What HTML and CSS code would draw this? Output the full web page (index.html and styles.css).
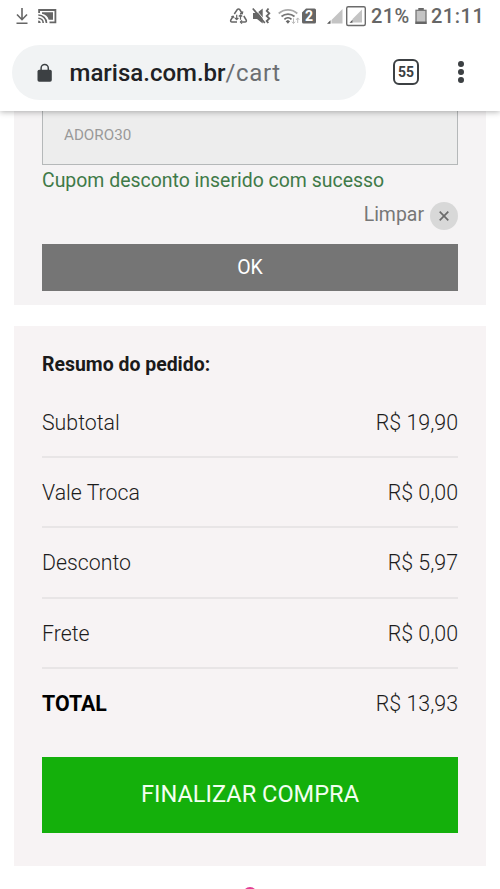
FILE: index.html
```html
<!DOCTYPE html>
<html lang="pt-BR">
<head>
<meta charset="utf-8">
<title>Marisa - Carrinho</title>
<link rel="stylesheet" href="styles.css">
</head>
<body>
<div class="screen">
  <header class="browser">
    <div class="status">
      <div class="status-left">
        <svg width="16" height="32" viewBox="14 0 16 32"><path d="M22 8v11.500M17 14.500l5 5.200 5-5.200M16.500 23.200h11" fill="none" stroke="#666" stroke-width="1.600"/></svg>
        <svg width="22" height="32" viewBox="36 0 22 32"><path d="M39.100 13V10h16.300v12.300H49.500" fill="none" stroke="#666" stroke-width="1.800"/><path d="M42 12.300h11v7.400h-4.300c-.7-3.200-3.400-5.500-6.700-6z" fill="#666"/><path d="M38.300 15c4.500 0 8.200 3.500 8.200 8M38.300 18.200c2.700 0 4.900 2.100 4.900 4.800" fill="none" stroke="#666" stroke-width="1.600"/><path d="M38.200 20.500a2.500 2.500 0 0 1 2.500 2.500h-2.500z" fill="#666"/></svg>
      </div>
      <div class="status-right">
        <svg width="22" height="32" viewBox="228 0 22 32"><g fill="none" stroke="#666" stroke-width="1.500" stroke-linejoin="round"><path d="M234.300 14l3-4.500c.6-.8 1.800-.8 2.400 0l2.500 4M243.800 16l2.400 4c.5.900 0 2-1.200 2h-4M237 22h-5c-1.200 0-1.700-1.100-1.200-2l2.200-3.500"/><path d="M240 13.300l2.300.5.500-2.400M231.300 16.700l2-.6.800 2M242 20.300l-1.600 1.700 1.600 1.600" stroke-width="1.200"/><path d="M236.700 14.800v4.700M235 18l1.700 1.700L238.400 18M240.500 19.800v-4.700M238.800 16.500l1.700-1.600 1.700 1.600" stroke-width="1.200"/></g></svg>
        <svg width="24" height="32" viewBox="250 0 24 32"><path d="M253 13h4l5.700-4.500v15L257 19h-4z" fill="#666"/><path d="M252.800 8.500l12 14.500" fill="none" stroke="#666" stroke-width="1.700"/><path d="M254.200 7.600l12 14.500" stroke="#fff" stroke-width=".9"/><path d="M268.500 8.500l-1.800 2.500 2.600 2.400-2.600 2.600 2.600 2.500-2.600 2.500 1.600 2" fill="none" stroke="#666" stroke-width="1.800"/></svg>
        <svg width="27" height="32" viewBox="274 0 27 32"><g fill="none" stroke="#777" stroke-width="1.700"><path d="M278.700 13.500c5.300-4.800 13.300-4.800 18.600 0" stroke="#aaa"/><path d="M281.500 16.500c3.700-3.300 9.300-3.300 13 0"/><path d="M284.400 19.300c2-1.800 5.100-1.800 7.100 0" stroke="#666"/></g><path d="M285.700 21.300l2.200-1.400 2.200 1.400-2.200 2.400z" fill="#666"/><path d="M293.500 18.300v5M292 21.700l1.500 1.900 1.500-1.900M297.700 23v-5M296.200 19.800l1.500-1.900 1.500 1.900" fill="none" stroke="#bbb" stroke-width="1"/></svg>
        <span class="sim"><svg width="14" height="16" viewBox="0 0 14 16"><path d="M4 .5h8.500a1.500 1.500 0 0 1 1.500 1.500v12a1.500 1.500 0 0 1-1.500 1.500h-11A1.500 1.500 0 0 1 0 14V4.500z" fill="#666"/></svg><b>2</b></span>
        <svg width="26" height="32" viewBox="319 0 26 32"><path d="M331.500 23.500V20l11-11v14.500z" fill="#c4c4c4"/><path d="M327 23.700l3.500-3.500v3.500z" fill="#555"/></svg>
        <svg width="23" height="32" viewBox="345 0 23 32"><rect x="346.700" y="6.700" width="18.600" height="18.800" rx="1.500" fill="none" stroke="#6b6b6b" stroke-width="1.400"/><path d="M352.500 22.500V19l9.500-9.500v13z" fill="#c4c4c4"/><path d="M349.500 22.700l3-3v3z" fill="#555"/></svg>
        <span class="battery-text">21%</span>
        <svg class="battery" width="14" height="32" viewBox="414 0 14 32"><path d="M418.300 8h5.500v2.500h-5.500z" fill="#666"/><rect x="416" y="10.300" width="10" height="13" fill="#c4c4c4" stroke="#777" stroke-width="1.300"/><path d="M415.500 21.500h11v2.500h-11z" fill="#666"/></svg>
        <span class="clock">21:11</span>
      </div>
    </div>
    <div class="toolbar">
      <div class="address">
        <svg class="lock" width="16" height="20" viewBox="0 0 16 20"><path d="M4.100 8V5.200a3.600 3.600 0 0 1 7.200 0V8" fill="none" stroke="#3c4043" stroke-width="1.500"/><rect x=".5" y="6.800" width="14.300" height="12" rx="1.700" fill="#3c4043"/></svg>
        <span class="url">marisa.com.br<span class="path">/cart</span></span>
      </div>
      <div class="tabs">55</div>
      <div class="menu"><i></i><i></i><i></i></div>
    </div>
  </header>
  <main>
    <section class="coupon">
      <div class="field">ADORO30</div>
      <p class="success"><span>Cupom desconto inserido com sucesso</span></p>
      <div class="clear"><span class="clear-label">Limpar</span><span class="close"><svg width="12" height="12" viewBox="0 0 12 12"><path d="M1.700 1.700l8.600 8.600M10.300 1.700l-8.600 8.600" stroke="#6b6b6b" stroke-width="1.700"/></svg></span></div>
      <div class="ok"><span>OK</span></div>
    </section>
    <section class="summary">
      <h2><span>Resumo do pedido:</span></h2>
      <div class="row"><span>Subtotal</span><span class="price">R$ 19,90</span></div>
      <div class="row"><span>Vale Troca</span><span class="price">R$ 0,00</span></div>
      <div class="row"><span>Desconto</span><span class="price">R$ 5,97</span></div>
      <div class="row"><span>Frete</span><span class="price">R$ 0,00</span></div>
      <div class="row total"><strong>TOTAL</strong><span class="price">R$ 13,93</span></div>
      <div class="checkout"><span>FINALIZAR COMPRA</span></div>
    </section>
    <div class="dot"></div>
  </main>
</div>
</body>
</html>
```
FILE: styles.css
```css
* { box-sizing: border-box; }
body { margin: 0; background: #fff; font-family: Roboto, sans-serif; }
svg { display: block; flex: none; }
.screen { width: 500px; height: 889px; overflow: hidden; }
.browser { position: relative; height: 111px; background: #fff; box-shadow: 0 1px 6px rgba(0,0,0,.3); }
.status { display: flex; justify-content: space-between; height: 32px; padding: 0 14px 0 14px; color: #666; }
.status-left, .status-right { display: flex; align-items: center; }
.status-left { gap: 6px; }
.sim { position: relative; width: 18px; padding-left: 1px; }
.sim b { position: absolute; left: 1px; top: 1px; width: 14px; text-align: center; font-size: 14px; line-height: 15px; color: #fff; }
.battery-text, .clock { font-size: 20px; line-height: 33px; font-weight: 500; white-space: nowrap; }
.battery-text { width: 43px; margin-left: 3px; letter-spacing: .4px; }
.clock { width: 55px; margin-left: 3px; letter-spacing: .5px; }
.toolbar { display: flex; align-items: center; height: 79px; padding: 0 0 0 12px; }
.address { display: flex; align-items: center; width: 354px; height: 55px; margin-top: 2px; padding-left: 25px; border-radius: 28px; background: #f1f3f4; }
.url { margin-left: 16.500px; font-size: 24px; line-height: 30px; font-weight: 500; color: #202124; white-space: nowrap; }
.path { font-weight: 400; color: #6b6e72; letter-spacing: .6px; }
.tabs { width: 26px; height: 26px; margin-top: 1px; margin-left: 27px; border: 2.5px solid #3c4043; border-radius: 6px; text-align: center; font-size: 14px; line-height: 22px; font-weight: 700; color: #3c4043; }
.menu { display: flex; flex-direction: column; gap: 2.500px; margin-top: 1px; margin-left: 39px; }
.menu i { width: 5.800px; height: 5.800px; border-radius: 50%; background: #3c4043; }
.coupon { height: 194px; margin: 0 14px; padding: 0 28px; background: #f5f3f4; }
.field { height: 54px; padding-left: 21px; border: 1.500px solid #b5b8b9; border-top: 0; background: #ededed; font-size: 15.200px; line-height: 48px; color: #999; }
.success { margin: 0; height: 31px; font-size: 19.450px; line-height: 31px; color: #3f7a48; white-space: nowrap; }
.clear { display: flex; align-items: center; justify-content: flex-end; gap: 6px; height: 40px; font-size: 19.450px; color: #777; }
.clear-label { padding-bottom: 3px; }
.close { display: grid; place-items: center; width: 28px; height: 28px; border-radius: 50%; background: #d8d8d8; }
.ok { height: 47px; margin-top: 8px; background: #757575; color: #fff; text-align: center; font-size: 19.450px; line-height: 48px; }
.summary { height: 540px; margin: 21px 14px 0; padding: 23px 28px 0; background: #f7f3f4; }
h2 { height: 39px; margin: 0; font-size: 19.450px; line-height: 31px; font-weight: 700; color: #1a1a1a; }
.row { display: flex; align-items: center; justify-content: space-between; height: 70.200px; padding-top: 1px; border-bottom: 2px solid #e8e5e6; font-size: 21.300px; font-weight: 300; color: #1c1c1c; }
.price { font-size: 21.400px; }
.total { border: 0; padding: 0; }
.total strong { font-weight: 700; color: #000; }
.checkout { height: 76px; margin-top: 18px; background: #14b00b; color: #f2fff0; text-align: center; font-size: 23.600px; line-height: 75px; }
.dot { width: 14px; height: 14px; margin: 21px auto 0; border-radius: 50%; background: #e23d94; }
```
